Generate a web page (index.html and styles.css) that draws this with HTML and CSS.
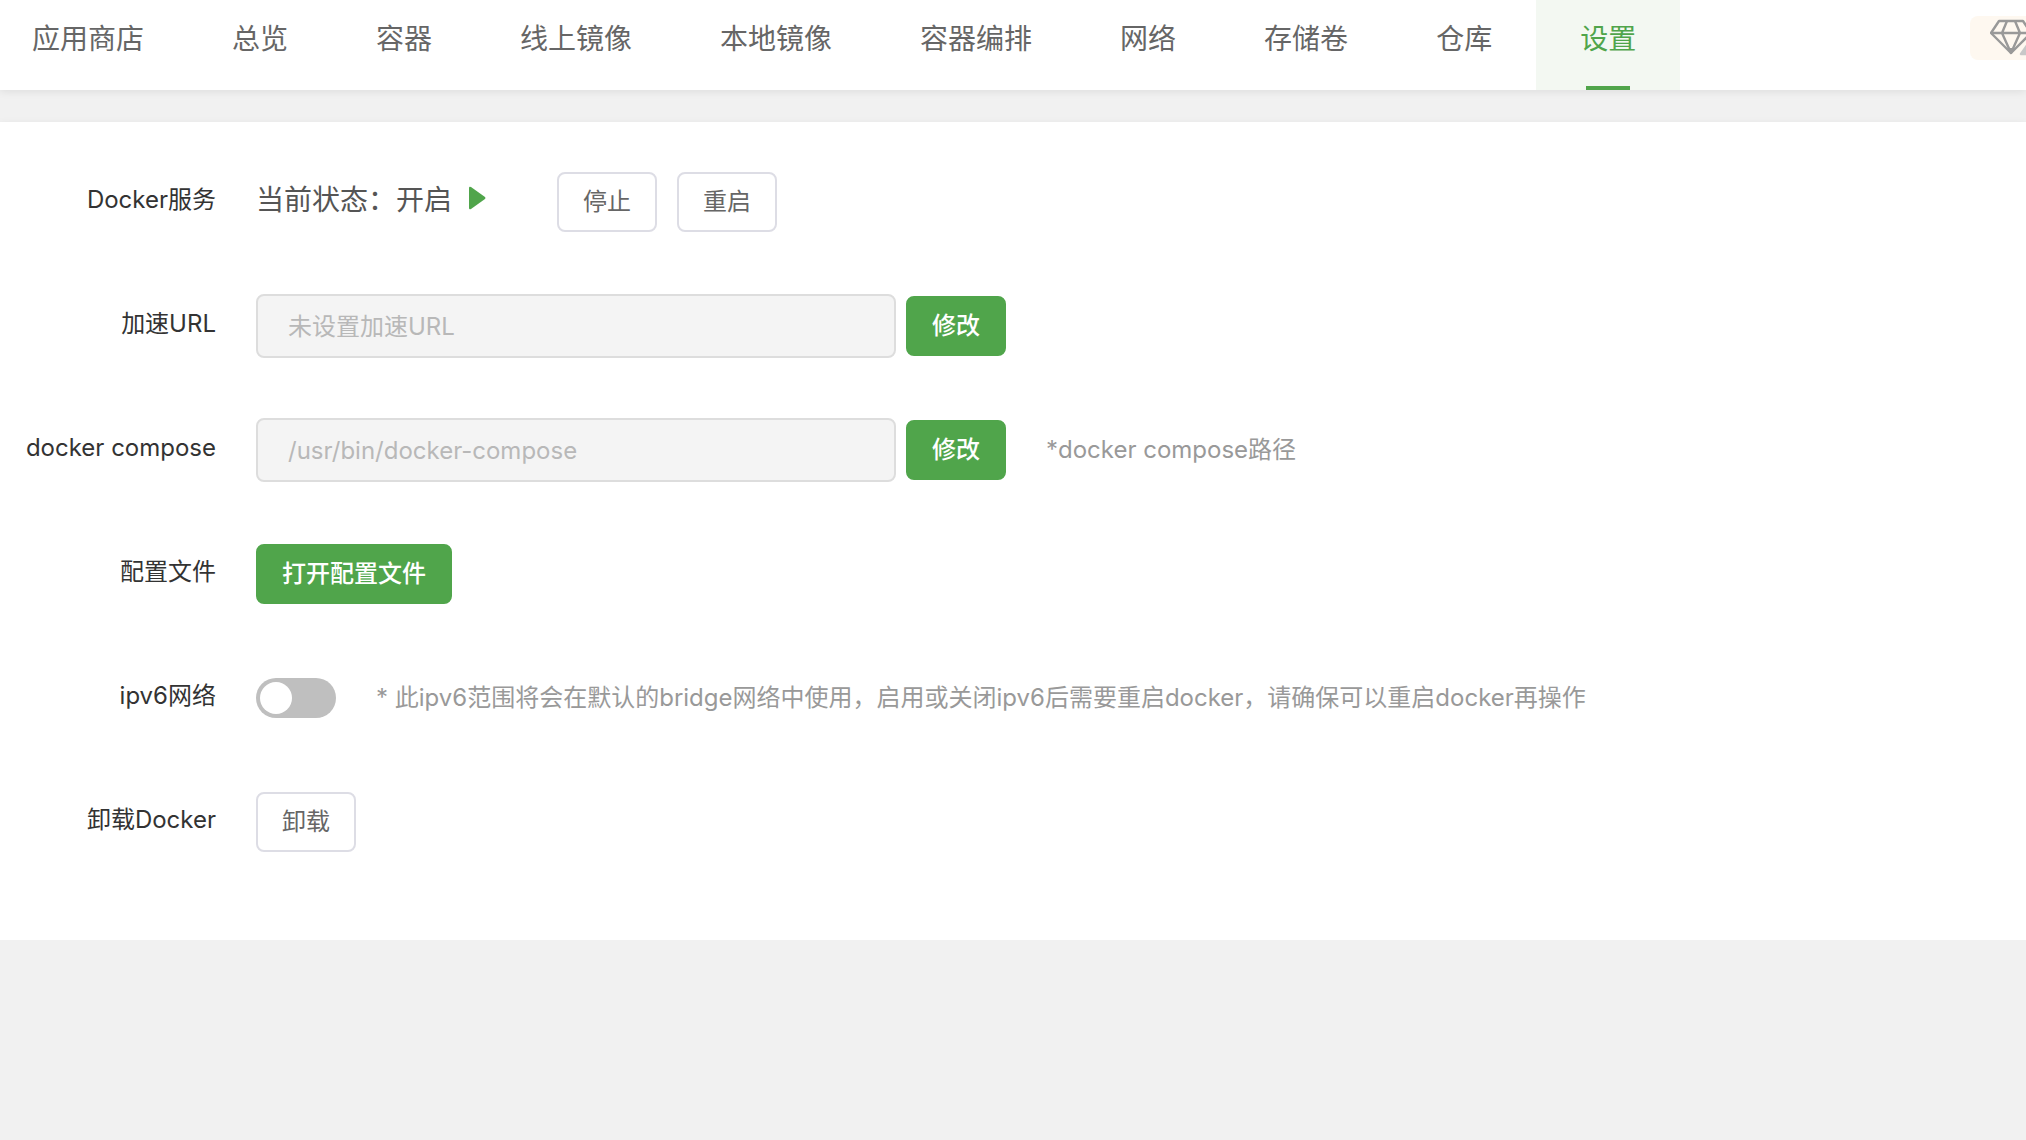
FILE: index.html
```html
<!DOCTYPE html>
<html lang="zh-CN">
<head>
<meta charset="utf-8">
<meta name="viewport" content="width=device-width, initial-scale=1">
<title>Docker 设置</title>
<link rel="stylesheet" href="styles.css">
</head>
<body>
<header class="topbar">
  <nav class="tabs">
    <a class="tab" href="#store">应用商店</a>
    <a class="tab" href="#overview">总览</a>
    <a class="tab" href="#containers">容器</a>
    <a class="tab" href="#online-images">线上镜像</a>
    <a class="tab" href="#local-images">本地镜像</a>
    <a class="tab" href="#compose">容器编排</a>
    <a class="tab" href="#network">网络</a>
    <a class="tab" href="#volumes">存储卷</a>
    <a class="tab" href="#registry">仓库</a>
    <a class="tab tab-active" href="#settings" aria-current="page">设置</a>
  </nav>
  <a class="vip" href="#vip" aria-label="VIP">
    <svg class="vip-icon" width="48" height="44" viewBox="0 0 48 44" fill="none" stroke="#999" stroke-width="2.4" stroke-linejoin="round" aria-hidden="true">
      <path d="M9 5H33L41 17L21 37L1 17Z"/>
      <path d="M1 17H41M17 5L12 17L21 37L30 17L25 5"/>
      <path d="M17 32H25L21 38Z" fill="#999" stroke="none"/>
      <path d="M38 28L31 38H48V28Z" fill="#c8c8c8" stroke="#c8c8c8"/>
    </svg>
  </a>
</header>

<main class="panel">
  <div class="row">
    <span class="label">Docker服务</span>
    <div class="field">
      <span class="status">当前状态：<span>开启</span></span>
      <svg class="play" width="18" height="24" viewBox="0 0 18 24" aria-hidden="true"><path d="M1 2Q1 0 3 1L17 11Q18 12 17 13L3 23Q1 24 1 22Z" fill="#50a54b"/></svg>
      <div class="actions">
        <button class="btn" type="button">停止</button>
        <button class="btn" type="button">重启</button>
      </div>
    </div>
  </div>
  <div class="row">
    <label class="label" for="mirror">加速URL</label>
    <div class="field">
      <input class="input" id="mirror" type="text" placeholder="未设置加速URL" disabled>
      <button class="btn btn-primary" type="button">修改</button>
    </div>
  </div>
  <div class="row">
    <label class="label" for="compose-path">docker compose</label>
    <div class="field">
      <input class="input" id="compose-path" type="text" value="/usr/bin/docker-compose" disabled>
      <button class="btn btn-primary" type="button">修改</button>
      <span class="hint">*docker compose路径</span>
    </div>
  </div>
  <div class="row">
    <span class="label">配置文件</span>
    <div class="field">
      <button class="btn btn-primary" type="button">打开配置文件</button>
    </div>
  </div>
  <div class="row">
    <label class="label" for="ipv6">ipv6网络</label>
    <div class="field">
      <input class="switch" id="ipv6" type="checkbox" role="switch">
      <span class="hint">* 此ipv6范围将会在默认的bridge网络中使用，启用或关闭ipv6后需要重启docker，请确保可以重启docker再操作</span>
    </div>
  </div>
  <div class="row">
    <span class="label">卸载Docker</span>
    <div class="field">
      <button class="btn" type="button">卸载</button>
    </div>
  </div>
</main>
</body>
</html>
```
FILE: styles.css
```css
* {
  box-sizing: border-box;
}

body {
  margin: 0;
  background: #f1f1f1;
  color: #333;
  font-family: Inter, "Noto Sans CJK SC", sans-serif;
  font-size: 24px;
  line-height: 36px;
}

.topbar {
  display: flex;
  justify-content: space-between;
  align-items: flex-start;
  background: #fff;
  box-shadow: 0 2px 8px rgba(0, 0, 0, 0.08);
}

.tabs {
  display: flex;
}

.tab {
  position: relative;
  padding: 19px 44px 31px;
  color: #666;
  font-size: 28px;
  line-height: 40px;
  text-decoration: none;
  white-space: nowrap;
}

.tab:first-child {
  padding-left: 32px;
}

.tab-active {
  background: #f3f8f2;
  color: #50a54b;
}

.tab-active::after {
  content: "";
  position: absolute;
  bottom: 0;
  left: 50%;
  width: 44px;
  height: 4px;
  margin-left: -22px;
  background: #50a54b;
}

.vip {
  width: 56px;
  height: 44px;
  margin-top: 16px;
  padding-left: 20px;
  overflow: hidden;
  border-radius: 8px 0 0 8px;
  background: #fef8f0;
}

.vip-icon {
  display: block;
}

.panel {
  display: flex;
  flex-direction: column;
  gap: 60px;
  margin-top: 32px;
  padding: 48px 0 86px;
  background: #fff;
  box-shadow: 0 2px 8px rgba(0, 0, 0, 0.08);
}

.row {
  display: grid;
  grid-template-columns: 216px 1fr;
  column-gap: 40px;
  align-items: center;
  min-height: 64px;
}

.label {
  padding-bottom: 4px;
  text-align: right;
  white-space: nowrap;
}

.field {
  display: flex;
  align-items: center;
}

.status {
  padding-bottom: 4px;
  color: #555;
  font-size: 28px;
  line-height: 40px;
}

.play {
  margin: 0 71px 8px 16px;
}

.actions {
  display: flex;
  gap: 20px;
}

.btn {
  height: 60px;
  padding: 0 24px;
  border: 2px solid #dddde5;
  border-radius: 8px;
  background: #fff;
  color: #666;
  font: inherit;
}

.btn-primary {
  border-color: #50a54b;
  background: #50a54b;
  color: #fff;
  font-weight: 500;
}

.input {
  width: 640px;
  height: 64px;
  margin-right: 10px;
  padding: 0 30px;
  border: 2px solid #ddd;
  border-radius: 8px;
  background: #f4f4f4;
  color: #b8b8b8;
  font: inherit;
}

.input::placeholder {
  color: #b8b8b8;
}

.hint {
  margin-left: 40px;
  color: #999;
}

.switch {
  flex: none;
  width: 80px;
  height: 40px;
  margin: 0;
  padding: 4px;
  border-radius: 20px;
  background: #bfbfbf;
  appearance: none;
}

.switch::before {
  content: "";
  display: block;
  width: 32px;
  height: 32px;
  border-radius: 50%;
  background: #fff;
}

.switch:checked {
  background: #50a54b;
}

.switch:checked::before {
  margin-left: auto;
}
```
